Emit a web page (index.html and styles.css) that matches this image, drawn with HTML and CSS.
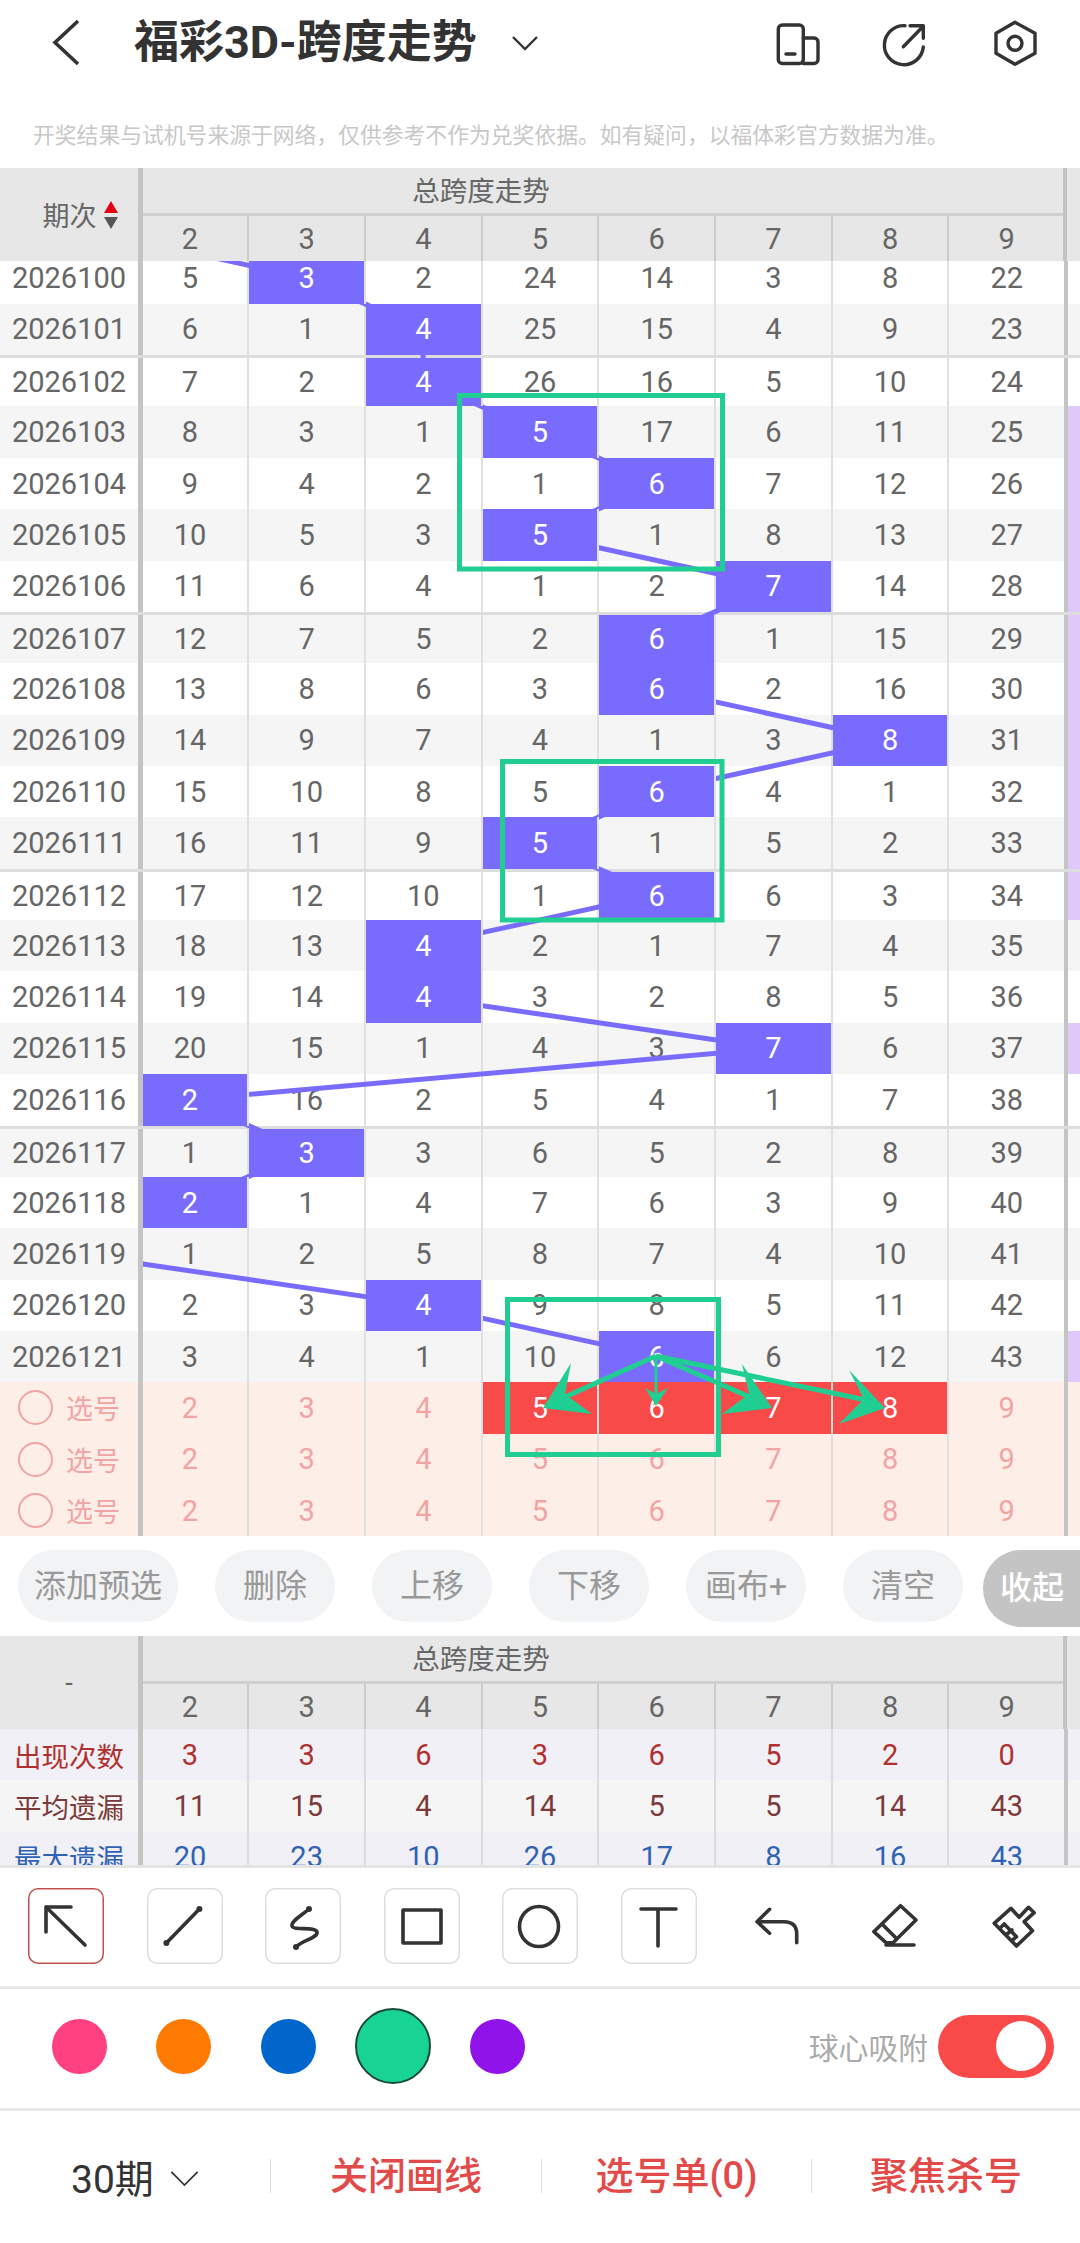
FILE: index.html
```html
<!DOCTYPE html>
<html>
<head>
<meta charset="UTF-8">
<title>福彩3D-跨度走势</title>
<link rel="stylesheet" href="styles.css">
</head>
<body>

<div class="topbar">
	<svg class="back" viewBox="0 0 30 50"><path d="M28 3L5 24.5L28 46"/></svg>
	<div class="title">福彩3D-跨度走势</div>
	<svg class="caret" viewBox="0 0 28 16"><path d="M2 2L14 14L26 2"/></svg>
	<div class="actions">
		<svg class="act" viewBox="0 0 60 60"><rect x="18.3" y="15" width="25" height="38.5" rx="4"/><path d="M43.3 28H54a4 4 0 0 1 4 4V49.5a4 4 0 0 1-4 4H43.3M26 44H35"/></svg>
		<svg class="act" viewBox="0 0 60 60"><path d="M30 15.7A19.5 19.5 0 1 0 48.3 37M28.3 36.7L47.7 16.7M35 15.7H48.3V28.3"/></svg>
		<svg class="act" viewBox="0 0 60 60"><path d="M30 12.3L50 23.3V43.3L30 54.3L11 43.3V23.3Z"/><circle cx="30" cy="33.3" r="7"/></svg>
	</div>
</div>

<div class="notice">开奖结果与试机号来源于网络，仅供参考不作为兑奖依据。如有疑问，以福体彩官方数据为准。</div>

<div class="trend">
	<div class="head">
		<div class="corner sortable">
			<span>期次</span>
			<div class="sort"><i class="up"></i><i class="down"></i></div>
		</div>
		<div class="head-main">
			<div class="head-title">总跨度走势</div>
			<div class="cols">
				<span class="cell">2</span><span class="cell">3</span><span class="cell">4</span><span class="cell">5</span><span class="cell">6</span><span class="cell">7</span><span class="cell">8</span><span class="cell">9</span>
			</div>
		</div>
		<div class="head-rail"></div>
	</div>

	<div class="trend-body">
		<svg class="links" viewBox="0 261 1080 1276"><polyline points="73,226.7 306.4,278.1 423.1,329.4 423.1,380.8 539.8,432.1 656.5,483.5 539.8,534.8 773.2,586.2 656.5,637.5 656.5,688.9 889.9,740.2 656.5,791.6 539.8,842.9 656.5,894.3 423.1,945.6 423.1,997 773.2,1048.3 189.7,1099.7 306.4,1151 189.7,1202.4 73,1253.7 423.1,1305.1 656.5,1356.4"/></svg>
		<div class="rows">
			<div class="row"><div class="period">2026100</div><span class="cell">5</span><span class="cell ball">3</span><span class="cell">2</span><span class="cell">24</span><span class="cell">14</span><span class="cell">3</span><span class="cell">8</span><span class="cell">22</span><div class="rail"></div></div>
			<div class="row"><div class="period">2026101</div><span class="cell">6</span><span class="cell">1</span><span class="cell ball">4</span><span class="cell">25</span><span class="cell">15</span><span class="cell">4</span><span class="cell">9</span><span class="cell">23</span><div class="rail"></div></div>
			<div class="row sep"><div class="period">2026102</div><span class="cell">7</span><span class="cell">2</span><span class="cell ball">4</span><span class="cell">26</span><span class="cell">16</span><span class="cell">5</span><span class="cell">10</span><span class="cell">24</span><div class="rail"></div></div>
			<div class="row"><div class="period">2026103</div><span class="cell">8</span><span class="cell">3</span><span class="cell">1</span><span class="cell ball">5</span><span class="cell">17</span><span class="cell">6</span><span class="cell">11</span><span class="cell">25</span><div class="rail on"></div></div>
			<div class="row"><div class="period">2026104</div><span class="cell">9</span><span class="cell">4</span><span class="cell">2</span><span class="cell">1</span><span class="cell ball">6</span><span class="cell">7</span><span class="cell">12</span><span class="cell">26</span><div class="rail on"></div></div>
			<div class="row"><div class="period">2026105</div><span class="cell">10</span><span class="cell">5</span><span class="cell">3</span><span class="cell ball">5</span><span class="cell">1</span><span class="cell">8</span><span class="cell">13</span><span class="cell">27</span><div class="rail on"></div></div>
			<div class="row"><div class="period">2026106</div><span class="cell">11</span><span class="cell">6</span><span class="cell">4</span><span class="cell">1</span><span class="cell">2</span><span class="cell ball">7</span><span class="cell">14</span><span class="cell">28</span><div class="rail on"></div></div>
			<div class="row sep"><div class="period">2026107</div><span class="cell">12</span><span class="cell">7</span><span class="cell">5</span><span class="cell">2</span><span class="cell ball">6</span><span class="cell">1</span><span class="cell">15</span><span class="cell">29</span><div class="rail on"></div></div>
			<div class="row"><div class="period">2026108</div><span class="cell">13</span><span class="cell">8</span><span class="cell">6</span><span class="cell">3</span><span class="cell ball">6</span><span class="cell">2</span><span class="cell">16</span><span class="cell">30</span><div class="rail on"></div></div>
			<div class="row"><div class="period">2026109</div><span class="cell">14</span><span class="cell">9</span><span class="cell">7</span><span class="cell">4</span><span class="cell">1</span><span class="cell">3</span><span class="cell ball">8</span><span class="cell">31</span><div class="rail on"></div></div>
			<div class="row"><div class="period">2026110</div><span class="cell">15</span><span class="cell">10</span><span class="cell">8</span><span class="cell">5</span><span class="cell ball">6</span><span class="cell">4</span><span class="cell">1</span><span class="cell">32</span><div class="rail on"></div></div>
			<div class="row"><div class="period">2026111</div><span class="cell">16</span><span class="cell">11</span><span class="cell">9</span><span class="cell ball">5</span><span class="cell">1</span><span class="cell">5</span><span class="cell">2</span><span class="cell">33</span><div class="rail on"></div></div>
			<div class="row sep"><div class="period">2026112</div><span class="cell">17</span><span class="cell">12</span><span class="cell">10</span><span class="cell">1</span><span class="cell ball">6</span><span class="cell">6</span><span class="cell">3</span><span class="cell">34</span><div class="rail on"></div></div>
			<div class="row"><div class="period">2026113</div><span class="cell">18</span><span class="cell">13</span><span class="cell ball">4</span><span class="cell">2</span><span class="cell">1</span><span class="cell">7</span><span class="cell">4</span><span class="cell">35</span><div class="rail"></div></div>
			<div class="row"><div class="period">2026114</div><span class="cell">19</span><span class="cell">14</span><span class="cell ball">4</span><span class="cell">3</span><span class="cell">2</span><span class="cell">8</span><span class="cell">5</span><span class="cell">36</span><div class="rail"></div></div>
			<div class="row"><div class="period">2026115</div><span class="cell">20</span><span class="cell">15</span><span class="cell">1</span><span class="cell">4</span><span class="cell">3</span><span class="cell ball">7</span><span class="cell">6</span><span class="cell">37</span><div class="rail on"></div></div>
			<div class="row"><div class="period">2026116</div><span class="cell ball">2</span><span class="cell">16</span><span class="cell">2</span><span class="cell">5</span><span class="cell">4</span><span class="cell">1</span><span class="cell">7</span><span class="cell">38</span><div class="rail"></div></div>
			<div class="row sep"><div class="period">2026117</div><span class="cell">1</span><span class="cell ball">3</span><span class="cell">3</span><span class="cell">6</span><span class="cell">5</span><span class="cell">2</span><span class="cell">8</span><span class="cell">39</span><div class="rail"></div></div>
			<div class="row"><div class="period">2026118</div><span class="cell ball">2</span><span class="cell">1</span><span class="cell">4</span><span class="cell">7</span><span class="cell">6</span><span class="cell">3</span><span class="cell">9</span><span class="cell">40</span><div class="rail"></div></div>
			<div class="row"><div class="period">2026119</div><span class="cell">1</span><span class="cell">2</span><span class="cell">5</span><span class="cell">8</span><span class="cell">7</span><span class="cell">4</span><span class="cell">10</span><span class="cell">41</span><div class="rail"></div></div>
			<div class="row"><div class="period">2026120</div><span class="cell">2</span><span class="cell">3</span><span class="cell ball">4</span><span class="cell">9</span><span class="cell">8</span><span class="cell">5</span><span class="cell">11</span><span class="cell">42</span><div class="rail"></div></div>
			<div class="row"><div class="period">2026121</div><span class="cell">3</span><span class="cell">4</span><span class="cell">1</span><span class="cell">10</span><span class="cell ball">6</span><span class="cell">6</span><span class="cell">12</span><span class="cell">43</span><div class="rail on"></div></div>
			<div class="row draft"><div class="period"><i class="radio"></i>选号</div><span class="cell">2</span><span class="cell">3</span><span class="cell">4</span><span class="cell pick">5</span><span class="cell pick">6</span><span class="cell pick">7</span><span class="cell pick">8</span><span class="cell">9</span><div class="rail"></div></div>
			<div class="row draft"><div class="period"><i class="radio"></i>选号</div><span class="cell">2</span><span class="cell">3</span><span class="cell">4</span><span class="cell">5</span><span class="cell">6</span><span class="cell">7</span><span class="cell">8</span><span class="cell">9</span><div class="rail"></div></div>
			<div class="row draft"><div class="period"><i class="radio"></i>选号</div><span class="cell">2</span><span class="cell">3</span><span class="cell">4</span><span class="cell">5</span><span class="cell">6</span><span class="cell">7</span><span class="cell">8</span><span class="cell">9</span><div class="rail"></div></div>
		</div>
	</div>

	<!-- 画线 -->
	<svg class="marks" viewBox="0 168 1080 1369">
		<rect x="459.5" y="395.5" width="263" height="173.5"/>
		<rect x="502.5" y="761.5" width="219.5" height="158.5"/>
		<rect x="507.5" y="1299.5" width="211" height="155"/>
		<path d="M656 1356L565 1397M656 1356L752 1398M656 1356L866 1400"/>
		<path class="thin" d="M656 1356V1398"/>
		<polygon points="543,1408 571,1363 565,1394 592,1414"/>
		<polygon points="656,1406 645,1388 656,1394 668,1388"/>
		<polygon points="772,1408 742,1364 749,1394 722,1414"/>
		<polygon points="885,1408 849,1370 864,1399 839,1424"/>
	</svg>
</div>

<div class="btnbar">
	<div class="btn wide">添加预选</div>
	<div class="btn">删除</div>
	<div class="btn">上移</div>
	<div class="btn">下移</div>
	<div class="btn">画布+</div>
	<div class="btn">清空</div>
	<div class="fold">收起</div>
</div>

<div class="stats">
	<div class="head">
		<div class="corner">-</div>
		<div class="head-main">
			<div class="head-title">总跨度走势</div>
			<div class="cols">
				<span class="cell">2</span><span class="cell">3</span><span class="cell">4</span><span class="cell">5</span><span class="cell">6</span><span class="cell">7</span><span class="cell">8</span><span class="cell">9</span>
			</div>
		</div>
		<div class="head-rail"></div>
	</div>
	<div class="row count"><div class="period">出现次数</div><span class="cell">3</span><span class="cell">3</span><span class="cell">6</span><span class="cell">3</span><span class="cell">6</span><span class="cell">5</span><span class="cell">2</span><span class="cell">0</span><div class="rail"></div></div>
	<div class="row avg"><div class="period">平均遗漏</div><span class="cell">11</span><span class="cell">15</span><span class="cell">4</span><span class="cell">14</span><span class="cell">5</span><span class="cell">5</span><span class="cell">14</span><span class="cell">43</span><div class="rail"></div></div>
	<div class="row max"><div class="period">最大遗漏</div><span class="cell">20</span><span class="cell">23</span><span class="cell">10</span><span class="cell">26</span><span class="cell">17</span><span class="cell">8</span><span class="cell">16</span><span class="cell">43</span><div class="rail"></div></div>
</div>

<div class="tools">
	<div class="tool active"><svg viewBox="0 0 76 76"><path d="M43 19H18V44M18 19L57 57"/></svg></div>
	<div class="tool"><svg viewBox="0 0 76 76"><path d="M52.4 21L19.4 55"/><circle class="dot" cx="52.4" cy="21" r="3"/><circle class="dot" cx="19.4" cy="55" r="3"/></svg></div>
	<div class="tool"><svg viewBox="0 0 76 76"><path d="M44 21C36 28 26 33 27 38C28 43 51 38 52 44C53 50 38 52 31 59"/><circle class="dot" cx="44" cy="21" r="3"/><circle class="dot" cx="31" cy="59" r="3"/></svg></div>
	<div class="tool"><svg viewBox="0 0 76 76"><rect x="19" y="22" width="38" height="33"/></svg></div>
	<div class="tool"><svg viewBox="0 0 76 76"><ellipse cx="37" cy="38.5" rx="19.5" ry="20"/></svg></div>
	<div class="tool"><svg viewBox="0 0 76 76"><path d="M20 21H55M37 21V58"/></svg></div>
	<div class="tool plain"><svg viewBox="0 0 76 76"><path d="M29.6 21.3L17 33.7L29.6 45.3M17 33.7H44Q56.7 33.7 56.7 46V54.7"/></svg></div>
	<div class="tool plain"><svg viewBox="0 0 76 76"><path d="M42.5 17.7L58 32L35 54.7H28L15.8 43.7ZM24 36L38 50M28 57H56"/></svg></div>
	<div class="tool plain"><svg viewBox="0 0 76 76"><path d="M17.2 35.3L33.9 20.3L42.2 29.3L51.5 19.3L57.2 24.7L47.2 33.7L55.5 42.7L39.5 58ZM27.2 36L39.5 48.7M22.9 40.3L27.2 36M28.9 47L34.9 42M34.9 52.7L39.5 48.7"/></svg></div>
</div>

<div class="palette">
	<div class="slot"><i class="swatch pink"></i></div>
	<div class="slot"><i class="swatch orange"></i></div>
	<div class="slot"><i class="swatch blue"></i></div>
	<div class="slot"><i class="swatch green"></i></div>
	<div class="slot"><i class="swatch purple"></i></div>
	<div class="snap">
		<span>球心吸附</span>
		<div class="switch"><i></i></div>
	</div>
</div>

<div class="footer">
	<div class="range">30期<svg viewBox="0 0 30 16"><path d="M1 1L15 15L29 1"/></svg></div>
	<div class="link"><span>关闭画线</span></div>
	<div class="link"><span>选号单(0)</span></div>
	<div class="link"><span>聚焦杀号</span></div>
</div>

</body>
</html>
```

FILE: styles.css
```css
* {box-sizing: border-box;}
html, body {margin: 0; padding: 0;}
body {width: 1080px; height: 2243px; overflow: hidden; background: #fff; color: #666;
	font-family: Roboto, "Noto Sans CJK SC", sans-serif;}
i {display: block; font-style: normal;}
svg {display: block; fill: none;}

.topbar {display: flex; align-items: center; height: 86px; padding: 0 35px 0 50px;}
.back {width: 30px; height: 50px; stroke: #333; stroke-width: 3.6;}
.title {width: 377px; margin-left: 54px; font-size: 45px; line-height: 56px; font-weight: 700; color: #333;}
.caret {width: 28px; height: 16px; stroke: #333; stroke-width: 2.4;}
.actions {display: flex; margin: -6px 0 0 auto;}
.act {width: 60px; height: 60px; margin-left: 50px; stroke: #333; stroke-width: 3.4; stroke-linecap: round; stroke-linejoin: round;}
.act:nth-child(2) {margin-left: 55px;}

.notice {height: 82px; padding: 36px 0 0 33px; font-size: 21.8px; line-height: 28px; color: #c8c8c8; white-space: nowrap;}

.trend {position: relative; height: 1369px; overflow: hidden;}

.head {display: flex; height: 93px; background: #e7e7e7;}
.corner {display: flex; align-items: center; justify-content: center; flex: none; width: 143px;
	border-right: 5px solid #c4c4c4; font-size: 27px;}
.corner.sortable {gap: 7px; padding-left: 22px;}
.sort i {width: 0; height: 0; border-left: 7px solid transparent; border-right: 7px solid transparent;}
.sort .up {border-bottom: 12px solid #e60012; margin-bottom: 4px;}
.sort .down {border-top: 12px solid #555;}
.head-main {flex: none; width: 920px; overflow: hidden;}
.head-title {height: 48px; padding: 6px 244px 0 0; border-bottom: 3px solid #cfcfcf;
	text-align: center; font-size: 27.5px; line-height: 36px;}
.cols {display: flex; height: 45px; margin-left: -10.4px;}
.cols .cell {border-right-color: #ccc;}
.head-rail {flex: 1; border-left: 4px solid #c4c4c4;}

.cell {display: flex; align-items: center; justify-content: center; flex: none; width: 116.7px;
	border-right: 2.5px solid #e0e0e0; background-clip: padding-box; font-size: 29px;}

.trend-body {position: relative; height: 1276px; overflow: hidden;}
.links {position: absolute; left: 0; top: 0; width: 1080px; height: 1276px; z-index: 1;}
.links polyline {fill: none; stroke: #7a6bff; stroke-width: 5;}
.rows {margin-top: -8.6px;}

.row {display: flex; height: 51.36px; background: #fff;}
.rows .row:nth-child(even) {background: #f5f5f5;}
.row.sep {border-top: 3px solid #ddd;}
.period {position: relative; z-index: 3; display: flex; align-items: center; justify-content: center; flex: none;
	width: 143px; margin-right: -10.4px; border-right: 5px solid #c4c4c4;
	background: inherit; background-clip: padding-box; font-size: 29px;}
.ball {position: relative; z-index: 2; background-color: #7a6bff; color: #fff;}
.rail {position: relative; z-index: 3; flex: none; width: 17px; margin-left: -2.6px; border-left: 4px solid #c4c4c4;}
.rail.on {background: #e0c8fb; background-clip: padding-box;}

.rows .row.draft {background: #fdeee8; color: #f2a3a3;}
.draft .period {justify-content: flex-start; gap: 13px; padding-left: 18px; font-size: 27px;}
.radio {width: 35px; height: 35px; border: 2px solid #f2a3a3; border-radius: 50%;}
.cell.pick {background-color: #f94a4a; color: #fff; border-right-color: #fbdcd8;}

.marks {position: absolute; left: 0; top: 0; width: 1080px; height: 1369px; z-index: 5;}
.marks rect, .marks path {fill: none; stroke: #20ce92; stroke-width: 5;}
.marks path.thin {stroke-width: 3;}
.marks polygon {fill: #20ce92;}

.btnbar {display: flex; align-items: flex-start; gap: 37px; height: 99px; padding: 13px 0 0 18px; overflow: hidden;}
.btn {flex: none; width: 120px; height: 72px; border-radius: 36px; background: #f2f3f5; color: #999;
	font-size: 32px; line-height: 72px; text-align: center;}
.btn.wide {width: 160px;}
.fold {flex: none; width: 100px; height: 77px; margin-left: -17px; padding-left: 17px; border-radius: 38px 0 0 38px;
	background: #c4c4c4; color: #fff; font-size: 32px; font-weight: 500; line-height: 77px;}

.stats {height: 232px; overflow: hidden; border-bottom: 3px solid #e4e4e4;}
.stats .period {font-size: 27.5px;}
.row.count {background: #f1f0f6; color: #b03030;}
.row.avg {background: #f5f5f5; color: #7c3a3a;}
.row.max {background: #f1f0f6; color: #2f62b4;}
.stats .cell {border-right-color: #dcdcdc;}
.stats .cols .cell {border-right-color: #ccc;}

.tools {display: flex; gap: 42.6px; height: 121px; padding: 20px 0 0 28px; border-bottom: 3px solid #e8e8e8;}
.tool {flex: none; width: 76px; height: 76px; border-radius: 10px; box-shadow: inset 0 0 0 1.5px #ddd;}
.tool.active {box-shadow: inset 0 0 0 1.5px #c0504d;}
.tool.plain {box-shadow: none;}
.tool svg {width: 76px; height: 76px; stroke: #333; stroke-width: 3.6; stroke-linecap: round; stroke-linejoin: round;}
.tool .dot {fill: #333; stroke: none;}

.palette {display: flex; align-items: center; height: 122px; padding: 0 26px 5px 26.75px; border-bottom: 3px solid #e8e8e8;}
.slot {display: flex; justify-content: center; align-items: center; width: 104.5px;}
.swatch {width: 55px; height: 55px; border-radius: 50%;}
.pink {background: #ff4081;}
.orange {background: #ff7a00;}
.blue {background: #0066cc;}
.green {width: 76px; height: 76px; background: #18d494; border: 2px solid #1c4a3a;}
.purple {background: #9013ea;}
.snap {display: flex; align-items: center; gap: 10px; margin-left: auto; font-size: 29.8px; color: #aaa;}
.switch {display: flex; align-items: center; justify-content: flex-end; width: 116px; height: 63px; padding-right: 8px;
	border-radius: 32px; background: #f94a4a;}
.switch i {width: 50px; height: 50px; border-radius: 50%; background: #fff;}

.footer {display: grid; grid-template-columns: 270px 271px 270px 269px; align-items: center; height: 130px; font-size: 38px;}
.range {display: flex; align-items: center; gap: 16px; padding-left: 71px; font-size: 39px; color: #333;}
.range svg {width: 29px; height: 15px; stroke: #333; stroke-width: 1.8; margin-top: 4px;}
.link {height: 34px; border-left: 1px solid #ddd; color: #e24a4a; font-weight: 500; line-height: 34px; text-align: center;}
```
